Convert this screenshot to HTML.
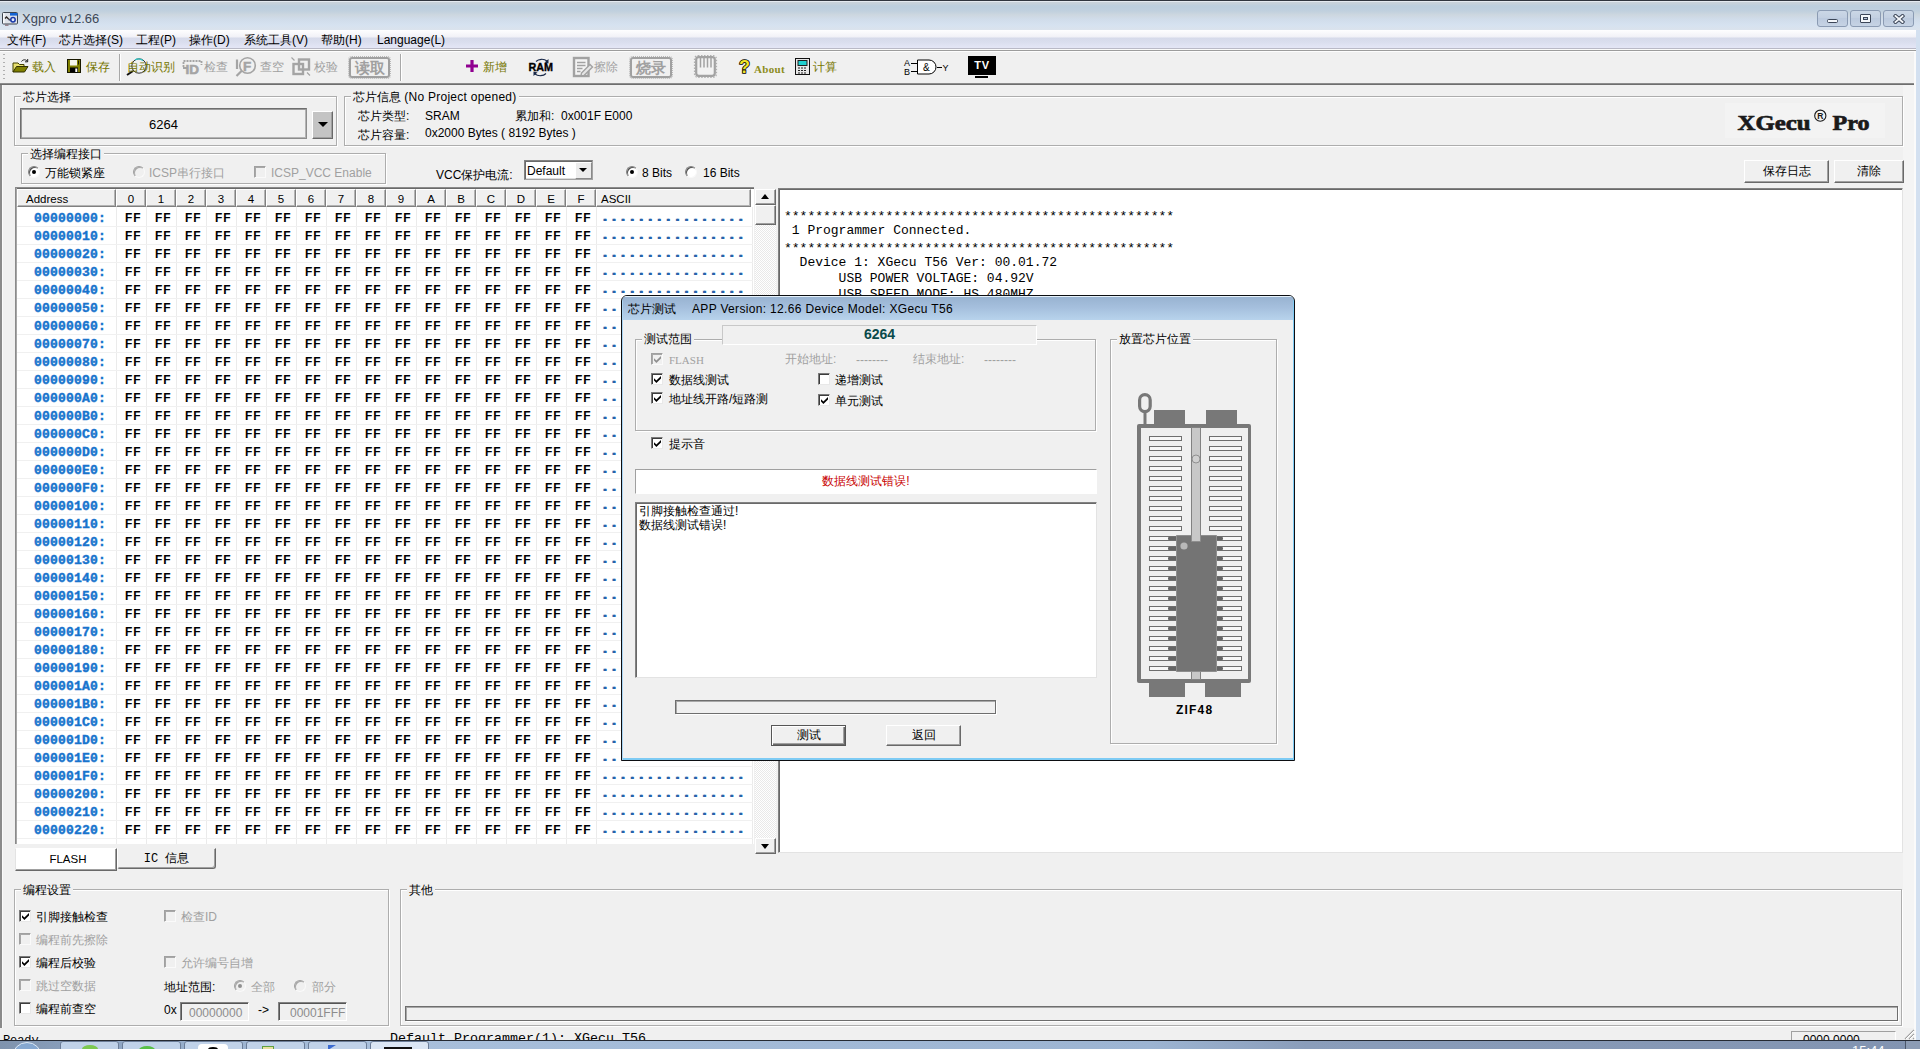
<!DOCTYPE html>
<html lang="zh"><head><meta charset="utf-8"><title>Xgpro v12.66</title>
<style>
*{box-sizing:border-box;margin:0;padding:0}
html,body{width:1920px;height:1049px;overflow:hidden;background:#f0f0f0}
body{position:relative;font-family:"Liberation Sans",sans-serif;font-size:12px;color:#000;line-height:1}
.a{position:absolute;white-space:nowrap}
.t{position:absolute;white-space:nowrap;line-height:14px;height:14px;font-size:12px}
.g{color:#a0a0a0}
.ol{color:#767600}
.mono{font-family:"Liberation Mono",monospace}
.grp{position:absolute;border:1px solid #d5dfe5;border-color:#adadad;box-shadow:inset 1px 1px 0 #fff, 1px 1px 0 #fff}
.grp>.lb{position:absolute;top:-8px;left:6px;background:#f0f0f0;padding:0 2px;line-height:14px;height:14px;font-size:12px;white-space:nowrap}
.cb{position:absolute;width:12px;height:12px;background:#fff;border:1px solid;border-color:#7a7a7a #e8e8e8 #e8e8e8 #7a7a7a;box-shadow:inset 1px 1px 0 #3c3c3c}
.cb.d{background:#f0f0f0;border-color:#a0a0a0 #fafafa #fafafa #a0a0a0;box-shadow:inset 1px 1px 0 #a8a8a8}
.cb svg{position:absolute;left:1px;top:1px;width:9px;height:9px}
.rd{position:absolute;width:12px;height:12px;border-radius:50%;background:#fff;border:1px solid;border-color:#808080 #f8f8f8 #f8f8f8 #808080;box-shadow:inset 1px 1px 0 #505050}
.rd.d{background:#f0f0f0;border-color:#a0a0a0 #fafafa #fafafa #a0a0a0;box-shadow:inset 1px 1px 0 #a8a8a8}
.rd i{position:absolute;left:3px;top:3px;width:4px;height:4px;border-radius:50%;background:#000}
.rd.d i{background:#909090}
.btn{position:absolute;background:#f0f0f0;border:1px solid;border-color:#fff #696969 #696969 #fff;box-shadow:inset -1px -1px 0 #a0a0a0;text-align:center;font-size:12px;white-space:nowrap}
.sunk{position:absolute;border:1px solid;border-color:#828282 #fff #fff #828282;box-shadow:inset 1px 1px 0 #555}
.hd{position:absolute;top:2px;height:18px;background:#f0f0f0;border:1px solid;border-color:#fff #808080 #808080 #fff;box-shadow:inset -1px -1px 0 #b4b4b4;font-size:11.5px;line-height:18px;text-align:center;white-space:nowrap}
.row{position:absolute;left:2px;width:736px;height:18px;border-bottom:1px solid #f0f0f0}
.ad{position:absolute;left:17px;top:3px;font:bold 13px/14px "Liberation Mono",monospace;color:#1874cd;letter-spacing:0.2px;white-space:nowrap;-webkit-text-stroke:0.45px #1874cd}
.hx{position:absolute;left:108px;top:2px;font:bold 12px/14px "Liberation Sans",sans-serif;color:#000;white-space:nowrap;word-spacing:0}
.hx b{display:inline-block;width:30px;text-align:left;font-weight:bold;letter-spacing:0.8px}
.as{position:absolute;left:583px;top:2px;font:bold 15px/14px "Liberation Mono",monospace;color:#2663ab;letter-spacing:0.05px;text-shadow:1px 0 0 #2663ab;white-space:nowrap}
</style></head>
<body>
<div class="a" style="left:0;top:0;width:1920px;height:30px;background:linear-gradient(#c8d2da 0,#c8d2da 3px,#bccedd 6px,#c0d0de 11px,#cdd7e0 15px,#d0dcea 19px,#d6e2f0 25px,#dbe3ed 30px)"></div>
<div class="a" style="left:0;top:0;width:1920px;height:1px;background:#30363e"></div>
<div class="a" style="left:0;top:1px;width:1920px;height:1px;background:#e4eaf0"></div>
<svg class="a" style="left:2px;top:12px" width="17" height="15" viewBox="0 0 17 15"><rect x="0.500" y="0.500" width="15" height="11.500" rx="1" fill="#dde1e8" stroke="#3e4650"/><rect x="1.200" y="1.200" width="1.300" height="10" fill="#fff"/><rect x="8" y="1" width="7.500" height="2.600" fill="#1464d4"/><path d="M3 6.500 L4.500 5 L6 6.500 L8 8 L9 7.500" fill="none" stroke="#2a2420" stroke-width="1.300"/><path d="M6.500 8 L8.500 8" stroke="#5a6a9a" stroke-width="1"/><circle cx="11" cy="7.700" r="2.200" fill="#e4ecff" stroke="#1838a8" stroke-width="1.500"/><rect x="3" y="12.500" width="3.500" height="1.300" fill="#8a7078"/></svg>
<div class="a" style="left:22px;top:11px;font-size:13px;line-height:16px;color:#3d4756">Xgpro v12.66</div>
<div class="a" style="left:1817px;top:10px;width:31px;height:17px;border:1px solid #8b9bb3;border-radius:3px;background:linear-gradient(#cbd7e6,#c2cfe1 50%,#bccade 50%,#c6d3e4)"><div class="a" style="left:9px;top:8px;width:11px;height:4px;border:1px solid #3c4658;background:#f4f7fb;border-radius:1.5px"></div></div>
<div class="a" style="left:1850px;top:10px;width:31px;height:17px;border:1px solid #8b9bb3;border-radius:3px;background:linear-gradient(#cbd7e6,#c2cfe1 50%,#bccade 50%,#c6d3e4)"><div class="a" style="left:9px;top:3px;width:11px;height:9px;border:1px solid #3c4658;background:#f4f7fb;border-radius:1px"></div><div class="a" style="left:12px;top:6px;width:5px;height:3px;border:1px solid #3c4658;background:#b8c6da"></div></div>
<div class="a" style="left:1883px;top:10px;width:31px;height:17px;border:1px solid #8b9bb3;border-radius:3px;background:linear-gradient(#cbd7e6,#c2cfe1 50%,#bccade 50%,#c6d3e4)"><svg class="a" style="left:9px;top:3px" width="12" height="10" viewBox="0 0 12 10"><path d="M2.500 2 L9.500 8 M9.500 2 L2.500 8" stroke="#3c4658" stroke-width="3.800" stroke-linecap="square"/><path d="M2.500 2 L9.500 8 M9.500 2 L2.500 8" stroke="#f4f7fb" stroke-width="1.900" stroke-linecap="square"/></svg></div>
<div class="a" style="left:0;top:30px;width:1916px;height:18px;background:linear-gradient(#fefeff 0,#f1f1f7 7px,#d6daea 8px,#dadeee 12px,#e4e6f6 18px)"></div>
<div class="a" style="left:0;top:48px;width:1916px;height:1px;background:#b9b9c6"></div>
<div class="a" style="left:0;top:49px;width:1916px;height:1px;background:#fafafa"></div>
<div class="a" style="left:0;top:50px;width:1916px;height:1px;background:#9c9c9c"></div>
<div class="a" style="left:0;top:51px;width:1916px;height:1px;background:#fdfdfd"></div>
<div class="a" style="left:1916px;top:30px;width:4px;height:1010px;background:#d3e0f0"></div>
<div class="a" style="left:1914px;top:52px;width:2px;height:988px;background:#fafafa"></div>
<div class="t " style="left:7px;top:33px;color:#454d5ewidth:39.35px;text-align-last:justify">文件(F)</div>
<div class="t " style="left:59px;top:33px;color:#454d5ewidth:64.00px;text-align-last:justify">芯片选择(S)</div>
<div class="t " style="left:136px;top:33px;color:#454d5ewidth:40.00px;text-align-last:justify">工程(P)</div>
<div class="t " style="left:189px;top:33px;color:#454d5ewidth:40.70px;text-align-last:justify">操作(D)</div>
<div class="t " style="left:244px;top:33px;color:#454d5ewidth:64.00px;text-align-last:justify">系统工具(V)</div>
<div class="t " style="left:321px;top:33px;color:#454d5ewidth:40.70px;text-align-last:justify">帮助(H)</div>
<div class="t " style="left:377px;top:33px;color:#454d5ewidth:68.10px;text-align-last:justify">Language(L)</div>
<div class="a" style="left:3px;top:54px;width:3px;height:28px;background:repeating-linear-gradient(#b0b0b0 0,#b0b0b0 1px,transparent 1px,transparent 4px);width:2px"></div>
<svg class="a" style="left:12px;top:58px" width="18" height="16" viewBox="0 0 18 16"><path d="M1 14 L1 5 L6 5 L7.5 6.5 L12 6.5 L12 8" fill="#e8e070" stroke="#404000"/><path d="M1 14 L4.5 8.5 L16 8.5 L12.5 14 Z" fill="#808000" stroke="#303000"/><path d="M9.5 3.5 C11 1.2 14 1.2 15.5 3.5 M15.7 1 L15.7 3.8 L13 3.8" fill="none" stroke="#202020"/></svg>
<div class="a ol" style="left:32px;top:59px;font-size:12px;line-height:16px;height:16px;width:24.00px;text-align-last:justify">载入</div>
<svg class="a" style="left:67px;top:59px" width="15" height="15" viewBox="0 0 15 15"><rect x="0.5" y="0.5" width="13" height="13" fill="#808000" stroke="#181800"/><rect x="3" y="1" width="7" height="5.5" fill="#f4f4ec"/><rect x="11" y="1.500" width="1" height="4" fill="#181800"/><rect x="3" y="8.500" width="8" height="5" fill="#000"/><rect x="8.300" y="9.500" width="2" height="3.500" fill="#fff"/></svg>
<div class="a ol" style="left:86px;top:59px;font-size:12px;line-height:16px;height:16px;width:24.00px;text-align-last:justify">保存</div>
<div class="a" style="left:119px;top:54px;width:1px;height:27px;background:#a8a8a8"></div><div class="a" style="left:120px;top:54px;width:1px;height:27px;background:#fff"></div>
<svg class="a" style="left:126px;top:57px" width="22" height="20" viewBox="0 0 22 20"><circle cx="13" cy="9" r="7.2" fill="none" stroke="#303030" stroke-width="1"/><path d="M9 3 A7 7 0 0 1 17 3.5" fill="none" stroke="#30c8c8" stroke-width="1.2"/><path d="M1 18 L7 14" stroke="#101010" stroke-width="2"/></svg>
<div class="a ol" style="left:127px;top:59px;font-size:12px;line-height:16px;height:16px;width:48.00px;text-align-last:justify">自动识别</div>
<svg class="a" style="left:182px;top:59px" width="21" height="16" viewBox="0 0 21 16"><path d="M1.500 8 L1.500 2 L19.500 2 L19.500 6" fill="none" stroke="#a4a4a4" stroke-width="1.800" stroke-dasharray="2 1"/><path d="M1 9 H5" stroke="#a4a4a4" stroke-width="2"/><text x="3.500" y="14.500" font-family="Liberation Sans" font-weight="bold" font-size="13.500" fill="#a4a4a4" stroke="#a4a4a4" stroke-width="0.600">ID</text></svg>
<div class="a g" style="left:204px;top:59px;font-size:12px;line-height:16px;height:16px;width:24.00px;text-align-last:justify">检查</div>
<svg class="a" style="left:235px;top:56px" width="24" height="22" viewBox="0 0 24 22"><circle cx="12.500" cy="9.500" r="7.800" fill="none" stroke="#a4a4a4" stroke-width="1.600"/><text x="8" y="14.500" font-family="Liberation Sans" font-weight="bold" font-size="13.500" fill="#a4a4a4" stroke="#a4a4a4" stroke-width="0.500">F</text><path d="M2 3.500 L2 13 M1.500 20 L7 14.500" stroke="#a4a4a4" stroke-width="2.200" fill="none"/></svg>
<div class="a g" style="left:260px;top:59px;font-size:12px;line-height:16px;height:16px;width:24.00px;text-align-last:justify">查空</div>
<svg class="a" style="left:291px;top:57px" width="22" height="20" viewBox="0 0 22 20"><rect x="2.500" y="7" width="9.500" height="10" fill="none" stroke="#a4a4a4" stroke-width="2.400"/><rect x="8" y="2.500" width="10" height="10" fill="none" stroke="#a4a4a4" stroke-width="2.400"/><path d="M0.500 0.500 L3.500 3.500 M16 15.500 L19 18.500" stroke="#a4a4a4" stroke-width="1.200"/></svg>
<div class="a g" style="left:314px;top:59px;font-size:12px;line-height:16px;height:16px;width:24.00px;text-align-last:justify">校验</div>
<div class="a" style="left:349px;top:57px;width:41px;height:21px;border:2px solid #a0a0a0;border-radius:3px;outline:1px dotted #b8b8b8;outline-offset:0px;color:#a0a0a0;font-weight:bold;font-size:15px;line-height:17px;text-align:center"><span style="display:inline-block;white-space:nowrap;width:30.00px;text-align-last:justify">读取</span></div>
<div class="a" style="left:400px;top:54px;width:1px;height:27px;background:#a8a8a8"></div><div class="a" style="left:401px;top:54px;width:1px;height:27px;background:#fff"></div>
<svg class="a" style="left:465px;top:59px" width="14" height="14" viewBox="0 0 14 14"><path d="M7 1 L7 13 M1 7 L13 7" stroke="#900090" stroke-width="3.2"/></svg>
<div class="a ol" style="left:483px;top:59px;font-size:12px;line-height:16px;height:16px;width:24.00px;text-align-last:justify">新增</div>
<svg class="a" style="left:526px;top:56px" width="30" height="22" viewBox="0 0 30 22"><path d="M10 5.500 A7 5 0 0 1 21 5 M20 17.500 A7 5 0 0 1 9 18" fill="none" stroke="#182848" stroke-width="1.100"/><path d="M22.500 3 L22.500 7.500 L18.500 6.500 Z M7.500 20 L7.500 15.500 L11.500 16.500 Z" fill="#182848"/><text x="2.500" y="14.600" font-family="Liberation Sans" font-weight="bold" font-size="10.500" fill="#000" stroke="#000" stroke-width="0.350" textLength="24.500" lengthAdjust="spacingAndGlyphs">RAM</text></svg>
<svg class="a" style="left:572px;top:56px" width="22" height="22" viewBox="0 0 22 22"><rect x="2" y="2" width="14.500" height="18" fill="#f4f4f4" stroke="#a2a2a2" stroke-width="2.400"/><path d="M5 6.500 H13.500 M5 9.500 H13.500 M5 12.500 H10.500 M5 15.500 H8.500" stroke="#a2a2a2" stroke-width="1.300"/><path d="M9.500 17 L18 8.500 L20.500 11 L12 19.500 L9 20 Z" fill="#e6e6e6" stroke="#a2a2a2" stroke-width="1.400"/></svg>
<div class="a g" style="left:594px;top:59px;font-size:12px;line-height:16px;height:16px;width:24.00px;text-align-last:justify">擦除</div>
<div class="a" style="left:630px;top:57px;width:42px;height:21px;border:2px solid #a0a0a0;border-radius:3px;outline:1px dotted #b8b8b8;outline-offset:0px;color:#a0a0a0;font-weight:bold;font-size:15px;line-height:17px;text-align:center"><span style="display:inline-block;white-space:nowrap;width:30.00px;text-align-last:justify">烧录</span></div>
<svg class="a" style="left:693px;top:54px" width="25" height="25" viewBox="0 0 25 25"><rect x="1.500" y="1.500" width="22" height="22" rx="3.500" fill="none" stroke="#b0b0b0" stroke-width="1.200" stroke-dasharray="1.500 1.500"/><rect x="3.200" y="3.200" width="18.600" height="18.600" rx="2.500" fill="#f2f2f2" stroke="#a2a2a2" stroke-width="2.200"/><path d="M7.500 4 V13.500 M11 4 V13.500 M14.500 4 V13.500 M18 4 V13.500" stroke="#a2a2a2" stroke-width="1.500"/></svg>
<svg class="a" style="left:737px;top:56px" width="15" height="20" viewBox="0 0 15 20"><text x="2" y="16.500" font-family="Liberation Sans" font-weight="bold" font-size="18" fill="#f0e428" stroke="#000" stroke-width="1.700" paint-order="stroke" stroke-linejoin="round">?</text></svg>
<div class="a" style="left:754px;top:61px;font:bold 11px/16px 'Liberation Serif',serif;letter-spacing:0.35px;color:#8c8c1c">About</div>
<svg class="a" style="left:795px;top:58px" width="16" height="17" viewBox="0 0 16 17"><rect x="0.5" y="0.5" width="14" height="16" fill="#e8e8e8" stroke="#101010"/><rect x="3" y="2.5" width="9" height="5" fill="#20d0d0" stroke="#202020"/><path d="M3 10 H12 M3 12.5 H12 M3 15 H12" stroke="#202020" stroke-dasharray="2 1"/></svg>
<div class="a ol" style="left:813px;top:59px;font-size:12px;line-height:16px;height:16px;width:24.00px;text-align-last:justify">计算</div>
<svg class="a" style="left:902px;top:56px" width="48" height="22" viewBox="0 0 48 22"><text x="2" y="9.500" font-family="Liberation Sans" font-size="9" fill="#000">A</text><text x="2" y="19" font-family="Liberation Sans" font-size="9" fill="#000">B</text><path d="M9 7.500 H15 M9 15.500 H15 M35 11.500 H40" stroke="#000"/><path d="M15.500 4 H27 A7 7 0 0 1 27 18 H15.500 Z" fill="#fff" stroke="#000"/><text x="21" y="15" font-family="Liberation Sans" font-size="10" fill="#000">&amp;</text><text x="40.500" y="14.500" font-family="Liberation Sans" font-size="9" fill="#000">Y</text></svg>
<div class="a" style="left:968px;top:56px;width:28px;height:19px;background:#000;color:#fff;font-weight:bold;font-size:11px;line-height:19px;letter-spacing:0.6px;text-align:center">TV</div><div class="a" style="left:975px;top:76px;width:13px;height:2px;background:#000"></div>
<div class="a" style="left:0;top:83px;width:1914px;height:1px;background:#8c8c8c"></div>
<div class="a" style="left:0;top:84px;width:1914px;height:1px;background:#6e6e6e"></div>
<div class="a" style="left:1903px;top:85px;width:11px;height:943px;background:#f4f4f4"></div>
<div class="a" style="left:0px;top:85px;width:2px;height:943px;background:#8a8a8a"></div>
<div class="a" style="left:2px;top:85px;width:1px;height:943px;background:#fafafa"></div>
<div class="grp" style="left:14px;top:96px;width:323px;height:50px"><span class="lb" style="top:-7px;width:52.00px;text-align-last:justify">芯片选择</span></div>
<div class="a" style="left:20px;top:108px;width:287px;height:31px;background:#f0f0f0;border:1px solid;border-color:#6e6e6e #8c8c8c #8c8c8c #6e6e6e;box-shadow:inset 1px 1px 0 #9a9a9a, inset -1px -1px 0 #b4b4b4;font-size:13px;line-height:32px;text-align:center">6264</div>
<div class="a" style="left:312px;top:111px;width:21px;height:28px;background:#c4c4c4;border:1px solid;border-color:#fff #696969 #696969 #fff;box-shadow:inset -1px -1px 0 #a0a0a0"><div class="a" style="left:5px;top:10px;border:5px solid transparent;border-top:5px solid #000;border-bottom:0"></div></div>
<div class="grp" style="left:344px;top:96px;width:1559px;height:50px"><span class="lb" style="top:-7px;width:167.50px;text-align-last:justify">芯片信息 <span style="letter-spacing:0.25px">(No Project opened)</span></span></div>
<div class="t " style="left:358px;top:109px;width:51.35px;text-align-last:justify">芯片类型:</div>
<div class="t " style="left:425px;top:109px;letter-spacing:-0.3pxwidth:33.50px;text-align-last:justify">SRAM</div>
<div class="t " style="left:515px;top:109px;width:39.35px;text-align-last:justify">累加和:</div>
<div class="t " style="left:561px;top:109px;letter-spacing:0.1pxwidth:72.50px;text-align-last:justify">0x001F E000</div>
<div class="t " style="left:358px;top:128px;width:51.35px;text-align-last:justify">芯片容量:</div>
<div class="t " style="left:425px;top:126px;letter-spacing:0.36pxwidth:160.50px;text-align-last:justify">0x2000 Bytes ( 8192 Bytes )</div>
<div class="a" style="left:1725px;top:103px;width:160px;height:35px;background:#f3f3f3"></div>
<svg class="a" style="left:1725px;top:103px" width="160" height="35" viewBox="0 0 160 35"><g font-family="Liberation Serif" font-weight="bold" font-size="21.5" fill="#1a1a1a" stroke="#1a1a1a" stroke-width="0.7"><text x="12.5" y="27.3" textLength="73" lengthAdjust="spacingAndGlyphs">XGecu</text><text x="107.5" y="27.3" textLength="37" lengthAdjust="spacingAndGlyphs">Pro</text></g><circle cx="95.3" cy="12.700" r="5.6" fill="none" stroke="#1a1a1a" stroke-width="1.1"/><text x="92.300" y="16" font-family="Liberation Sans" font-weight="bold" font-size="8.500" fill="#1a1a1a">R</text></svg>
<div class="grp" style="left:21px;top:153px;width:365px;height:31px"><span class="lb" style="top:-7px;width:76.00px;text-align-last:justify">选择编程接口</span></div>
<div class="rd" style="left:28px;top:166px"><i></i></div>
<div class="t " style="left:45px;top:166px;width:60.00px;text-align-last:justify">万能锁紧座</div>
<div class="rd d" style="left:133px;top:166px"></div>
<div class="t g" style="left:149px;top:166px;width:76.05px;text-align-last:justify">ICSP串行接口</div>
<div class="cb d" style="left:254px;top:166px"></div>
<div class="t g" style="left:271px;top:166px;letter-spacing:-0.45pxwidth:94.00px;text-align-last:justify">ICSP_VCC Enable</div>
<div class="t " style="left:436px;top:168px;width:76.70px;text-align-last:justify">VCC保护电流:</div>
<div class="a" style="left:524px;top:160px;width:69px;height:20px;background:#fff;border:1px solid;border-color:#828282 #a4a4a4 #a4a4a4 #828282;box-shadow:inset 1px 1px 0 #6a6a6a, inset -1px -1px 0 #dcdcdc"><div class="a" style="left:2px;top:3px;font-size:12px;line-height:14px">Default</div><div class="a" style="left:50px;top:1px;width:17px;height:17px;background:#ececec;border:1px solid;border-color:#fff #8a8a8a #8a8a8a #fff"><div class="a" style="left:3px;top:5px;border:4px solid transparent;border-top:4px solid #000;border-bottom:0"></div></div></div>
<div class="rd" style="left:626px;top:166px"><i></i></div>
<div class="t " style="left:642px;top:166px;width:30.05px;text-align-last:justify">8 Bits</div>
<div class="rd" style="left:685px;top:166px"></div>
<div class="t " style="left:703px;top:166px;width:36.70px;text-align-last:justify">16 Bits</div>
<div class="btn" style="left:1744px;top:160px;width:85px;height:23px;line-height:21px"><span style="display:inline-block;white-space:nowrap;width:48.00px;text-align-last:justify">保存日志</span></div>
<div class="btn" style="left:1834px;top:160px;width:70px;height:23px;line-height:21px"><span style="display:inline-block;white-space:nowrap;width:24.00px;text-align-last:justify">清除</span></div>
<div class="a" style="left:15px;top:187px;width:739px;height:657px;background:#fff;overflow:hidden">
<div class="a" style="left:0;top:0;width:739px;height:1px;background:#8a8a8a"></div><div class="a" style="left:0;top:1px;width:739px;height:1px;background:#6a6a6a"></div><div class="a" style="left:0;top:0;width:1px;height:657px;background:#8a8a8a"></div><div class="a" style="left:1px;top:1px;width:1px;height:656px;background:#a6a6a6"></div>
<div class="a" style="left:101px;top:20px;width:1px;height:637px;background:#ebebeb"></div><div class="a" style="left:131px;top:20px;width:1px;height:637px;background:#ebebeb"></div><div class="a" style="left:161px;top:20px;width:1px;height:637px;background:#ebebeb"></div><div class="a" style="left:191px;top:20px;width:1px;height:637px;background:#ebebeb"></div><div class="a" style="left:221px;top:20px;width:1px;height:637px;background:#ebebeb"></div><div class="a" style="left:251px;top:20px;width:1px;height:637px;background:#ebebeb"></div><div class="a" style="left:281px;top:20px;width:1px;height:637px;background:#ebebeb"></div><div class="a" style="left:311px;top:20px;width:1px;height:637px;background:#ebebeb"></div><div class="a" style="left:341px;top:20px;width:1px;height:637px;background:#ebebeb"></div><div class="a" style="left:371px;top:20px;width:1px;height:637px;background:#ebebeb"></div><div class="a" style="left:401px;top:20px;width:1px;height:637px;background:#ebebeb"></div><div class="a" style="left:431px;top:20px;width:1px;height:637px;background:#ebebeb"></div><div class="a" style="left:461px;top:20px;width:1px;height:637px;background:#ebebeb"></div><div class="a" style="left:491px;top:20px;width:1px;height:637px;background:#ebebeb"></div><div class="a" style="left:521px;top:20px;width:1px;height:637px;background:#ebebeb"></div><div class="a" style="left:551px;top:20px;width:1px;height:637px;background:#ebebeb"></div><div class="a" style="left:581px;top:20px;width:1px;height:637px;background:#ebebeb"></div><div class="a" style="left:737px;top:20px;width:1px;height:637px;background:#ebebeb"></div>
<div class="hd" style="left:2px;width:99px;text-align:left;padding-left:8px">Address</div><div class="hd" style="left:101px;width:30px">0</div><div class="hd" style="left:131px;width:30px">1</div><div class="hd" style="left:161px;width:30px">2</div><div class="hd" style="left:191px;width:30px">3</div><div class="hd" style="left:221px;width:30px">4</div><div class="hd" style="left:251px;width:30px">5</div><div class="hd" style="left:281px;width:30px">6</div><div class="hd" style="left:311px;width:30px">7</div><div class="hd" style="left:341px;width:30px">8</div><div class="hd" style="left:371px;width:30px">9</div><div class="hd" style="left:401px;width:30px">A</div><div class="hd" style="left:431px;width:30px">B</div><div class="hd" style="left:461px;width:30px">C</div><div class="hd" style="left:491px;width:30px">D</div><div class="hd" style="left:521px;width:30px">E</div><div class="hd" style="left:551px;width:30px">F</div><div class="hd" style="left:581px;width:155px;text-align:left;padding-left:4px">ASCII</div>
<div class="row" style="top:22px"><span class="ad">00000000:</span><span class="hx"><b>FF</b><b>FF</b><b>FF</b><b>FF</b><b>FF</b><b>FF</b><b>FF</b><b>FF</b><b>FF</b><b>FF</b><b>FF</b><b>FF</b><b>FF</b><b>FF</b><b>FF</b><b>FF</b></span><span class="as">................</span></div>
<div class="row" style="top:40px"><span class="ad">00000010:</span><span class="hx"><b>FF</b><b>FF</b><b>FF</b><b>FF</b><b>FF</b><b>FF</b><b>FF</b><b>FF</b><b>FF</b><b>FF</b><b>FF</b><b>FF</b><b>FF</b><b>FF</b><b>FF</b><b>FF</b></span><span class="as">................</span></div>
<div class="row" style="top:58px"><span class="ad">00000020:</span><span class="hx"><b>FF</b><b>FF</b><b>FF</b><b>FF</b><b>FF</b><b>FF</b><b>FF</b><b>FF</b><b>FF</b><b>FF</b><b>FF</b><b>FF</b><b>FF</b><b>FF</b><b>FF</b><b>FF</b></span><span class="as">................</span></div>
<div class="row" style="top:76px"><span class="ad">00000030:</span><span class="hx"><b>FF</b><b>FF</b><b>FF</b><b>FF</b><b>FF</b><b>FF</b><b>FF</b><b>FF</b><b>FF</b><b>FF</b><b>FF</b><b>FF</b><b>FF</b><b>FF</b><b>FF</b><b>FF</b></span><span class="as">................</span></div>
<div class="row" style="top:94px"><span class="ad">00000040:</span><span class="hx"><b>FF</b><b>FF</b><b>FF</b><b>FF</b><b>FF</b><b>FF</b><b>FF</b><b>FF</b><b>FF</b><b>FF</b><b>FF</b><b>FF</b><b>FF</b><b>FF</b><b>FF</b><b>FF</b></span><span class="as">................</span></div>
<div class="row" style="top:112px"><span class="ad">00000050:</span><span class="hx"><b>FF</b><b>FF</b><b>FF</b><b>FF</b><b>FF</b><b>FF</b><b>FF</b><b>FF</b><b>FF</b><b>FF</b><b>FF</b><b>FF</b><b>FF</b><b>FF</b><b>FF</b><b>FF</b></span><span class="as">................</span></div>
<div class="row" style="top:130px"><span class="ad">00000060:</span><span class="hx"><b>FF</b><b>FF</b><b>FF</b><b>FF</b><b>FF</b><b>FF</b><b>FF</b><b>FF</b><b>FF</b><b>FF</b><b>FF</b><b>FF</b><b>FF</b><b>FF</b><b>FF</b><b>FF</b></span><span class="as">................</span></div>
<div class="row" style="top:148px"><span class="ad">00000070:</span><span class="hx"><b>FF</b><b>FF</b><b>FF</b><b>FF</b><b>FF</b><b>FF</b><b>FF</b><b>FF</b><b>FF</b><b>FF</b><b>FF</b><b>FF</b><b>FF</b><b>FF</b><b>FF</b><b>FF</b></span><span class="as">................</span></div>
<div class="row" style="top:166px"><span class="ad">00000080:</span><span class="hx"><b>FF</b><b>FF</b><b>FF</b><b>FF</b><b>FF</b><b>FF</b><b>FF</b><b>FF</b><b>FF</b><b>FF</b><b>FF</b><b>FF</b><b>FF</b><b>FF</b><b>FF</b><b>FF</b></span><span class="as">................</span></div>
<div class="row" style="top:184px"><span class="ad">00000090:</span><span class="hx"><b>FF</b><b>FF</b><b>FF</b><b>FF</b><b>FF</b><b>FF</b><b>FF</b><b>FF</b><b>FF</b><b>FF</b><b>FF</b><b>FF</b><b>FF</b><b>FF</b><b>FF</b><b>FF</b></span><span class="as">................</span></div>
<div class="row" style="top:202px"><span class="ad">000000A0:</span><span class="hx"><b>FF</b><b>FF</b><b>FF</b><b>FF</b><b>FF</b><b>FF</b><b>FF</b><b>FF</b><b>FF</b><b>FF</b><b>FF</b><b>FF</b><b>FF</b><b>FF</b><b>FF</b><b>FF</b></span><span class="as">................</span></div>
<div class="row" style="top:220px"><span class="ad">000000B0:</span><span class="hx"><b>FF</b><b>FF</b><b>FF</b><b>FF</b><b>FF</b><b>FF</b><b>FF</b><b>FF</b><b>FF</b><b>FF</b><b>FF</b><b>FF</b><b>FF</b><b>FF</b><b>FF</b><b>FF</b></span><span class="as">................</span></div>
<div class="row" style="top:238px"><span class="ad">000000C0:</span><span class="hx"><b>FF</b><b>FF</b><b>FF</b><b>FF</b><b>FF</b><b>FF</b><b>FF</b><b>FF</b><b>FF</b><b>FF</b><b>FF</b><b>FF</b><b>FF</b><b>FF</b><b>FF</b><b>FF</b></span><span class="as">................</span></div>
<div class="row" style="top:256px"><span class="ad">000000D0:</span><span class="hx"><b>FF</b><b>FF</b><b>FF</b><b>FF</b><b>FF</b><b>FF</b><b>FF</b><b>FF</b><b>FF</b><b>FF</b><b>FF</b><b>FF</b><b>FF</b><b>FF</b><b>FF</b><b>FF</b></span><span class="as">................</span></div>
<div class="row" style="top:274px"><span class="ad">000000E0:</span><span class="hx"><b>FF</b><b>FF</b><b>FF</b><b>FF</b><b>FF</b><b>FF</b><b>FF</b><b>FF</b><b>FF</b><b>FF</b><b>FF</b><b>FF</b><b>FF</b><b>FF</b><b>FF</b><b>FF</b></span><span class="as">................</span></div>
<div class="row" style="top:292px"><span class="ad">000000F0:</span><span class="hx"><b>FF</b><b>FF</b><b>FF</b><b>FF</b><b>FF</b><b>FF</b><b>FF</b><b>FF</b><b>FF</b><b>FF</b><b>FF</b><b>FF</b><b>FF</b><b>FF</b><b>FF</b><b>FF</b></span><span class="as">................</span></div>
<div class="row" style="top:310px"><span class="ad">00000100:</span><span class="hx"><b>FF</b><b>FF</b><b>FF</b><b>FF</b><b>FF</b><b>FF</b><b>FF</b><b>FF</b><b>FF</b><b>FF</b><b>FF</b><b>FF</b><b>FF</b><b>FF</b><b>FF</b><b>FF</b></span><span class="as">................</span></div>
<div class="row" style="top:328px"><span class="ad">00000110:</span><span class="hx"><b>FF</b><b>FF</b><b>FF</b><b>FF</b><b>FF</b><b>FF</b><b>FF</b><b>FF</b><b>FF</b><b>FF</b><b>FF</b><b>FF</b><b>FF</b><b>FF</b><b>FF</b><b>FF</b></span><span class="as">................</span></div>
<div class="row" style="top:346px"><span class="ad">00000120:</span><span class="hx"><b>FF</b><b>FF</b><b>FF</b><b>FF</b><b>FF</b><b>FF</b><b>FF</b><b>FF</b><b>FF</b><b>FF</b><b>FF</b><b>FF</b><b>FF</b><b>FF</b><b>FF</b><b>FF</b></span><span class="as">................</span></div>
<div class="row" style="top:364px"><span class="ad">00000130:</span><span class="hx"><b>FF</b><b>FF</b><b>FF</b><b>FF</b><b>FF</b><b>FF</b><b>FF</b><b>FF</b><b>FF</b><b>FF</b><b>FF</b><b>FF</b><b>FF</b><b>FF</b><b>FF</b><b>FF</b></span><span class="as">................</span></div>
<div class="row" style="top:382px"><span class="ad">00000140:</span><span class="hx"><b>FF</b><b>FF</b><b>FF</b><b>FF</b><b>FF</b><b>FF</b><b>FF</b><b>FF</b><b>FF</b><b>FF</b><b>FF</b><b>FF</b><b>FF</b><b>FF</b><b>FF</b><b>FF</b></span><span class="as">................</span></div>
<div class="row" style="top:400px"><span class="ad">00000150:</span><span class="hx"><b>FF</b><b>FF</b><b>FF</b><b>FF</b><b>FF</b><b>FF</b><b>FF</b><b>FF</b><b>FF</b><b>FF</b><b>FF</b><b>FF</b><b>FF</b><b>FF</b><b>FF</b><b>FF</b></span><span class="as">................</span></div>
<div class="row" style="top:418px"><span class="ad">00000160:</span><span class="hx"><b>FF</b><b>FF</b><b>FF</b><b>FF</b><b>FF</b><b>FF</b><b>FF</b><b>FF</b><b>FF</b><b>FF</b><b>FF</b><b>FF</b><b>FF</b><b>FF</b><b>FF</b><b>FF</b></span><span class="as">................</span></div>
<div class="row" style="top:436px"><span class="ad">00000170:</span><span class="hx"><b>FF</b><b>FF</b><b>FF</b><b>FF</b><b>FF</b><b>FF</b><b>FF</b><b>FF</b><b>FF</b><b>FF</b><b>FF</b><b>FF</b><b>FF</b><b>FF</b><b>FF</b><b>FF</b></span><span class="as">................</span></div>
<div class="row" style="top:454px"><span class="ad">00000180:</span><span class="hx"><b>FF</b><b>FF</b><b>FF</b><b>FF</b><b>FF</b><b>FF</b><b>FF</b><b>FF</b><b>FF</b><b>FF</b><b>FF</b><b>FF</b><b>FF</b><b>FF</b><b>FF</b><b>FF</b></span><span class="as">................</span></div>
<div class="row" style="top:472px"><span class="ad">00000190:</span><span class="hx"><b>FF</b><b>FF</b><b>FF</b><b>FF</b><b>FF</b><b>FF</b><b>FF</b><b>FF</b><b>FF</b><b>FF</b><b>FF</b><b>FF</b><b>FF</b><b>FF</b><b>FF</b><b>FF</b></span><span class="as">................</span></div>
<div class="row" style="top:490px"><span class="ad">000001A0:</span><span class="hx"><b>FF</b><b>FF</b><b>FF</b><b>FF</b><b>FF</b><b>FF</b><b>FF</b><b>FF</b><b>FF</b><b>FF</b><b>FF</b><b>FF</b><b>FF</b><b>FF</b><b>FF</b><b>FF</b></span><span class="as">................</span></div>
<div class="row" style="top:508px"><span class="ad">000001B0:</span><span class="hx"><b>FF</b><b>FF</b><b>FF</b><b>FF</b><b>FF</b><b>FF</b><b>FF</b><b>FF</b><b>FF</b><b>FF</b><b>FF</b><b>FF</b><b>FF</b><b>FF</b><b>FF</b><b>FF</b></span><span class="as">................</span></div>
<div class="row" style="top:526px"><span class="ad">000001C0:</span><span class="hx"><b>FF</b><b>FF</b><b>FF</b><b>FF</b><b>FF</b><b>FF</b><b>FF</b><b>FF</b><b>FF</b><b>FF</b><b>FF</b><b>FF</b><b>FF</b><b>FF</b><b>FF</b><b>FF</b></span><span class="as">................</span></div>
<div class="row" style="top:544px"><span class="ad">000001D0:</span><span class="hx"><b>FF</b><b>FF</b><b>FF</b><b>FF</b><b>FF</b><b>FF</b><b>FF</b><b>FF</b><b>FF</b><b>FF</b><b>FF</b><b>FF</b><b>FF</b><b>FF</b><b>FF</b><b>FF</b></span><span class="as">................</span></div>
<div class="row" style="top:562px"><span class="ad">000001E0:</span><span class="hx"><b>FF</b><b>FF</b><b>FF</b><b>FF</b><b>FF</b><b>FF</b><b>FF</b><b>FF</b><b>FF</b><b>FF</b><b>FF</b><b>FF</b><b>FF</b><b>FF</b><b>FF</b><b>FF</b></span><span class="as">................</span></div>
<div class="row" style="top:580px"><span class="ad">000001F0:</span><span class="hx"><b>FF</b><b>FF</b><b>FF</b><b>FF</b><b>FF</b><b>FF</b><b>FF</b><b>FF</b><b>FF</b><b>FF</b><b>FF</b><b>FF</b><b>FF</b><b>FF</b><b>FF</b><b>FF</b></span><span class="as">................</span></div>
<div class="row" style="top:598px"><span class="ad">00000200:</span><span class="hx"><b>FF</b><b>FF</b><b>FF</b><b>FF</b><b>FF</b><b>FF</b><b>FF</b><b>FF</b><b>FF</b><b>FF</b><b>FF</b><b>FF</b><b>FF</b><b>FF</b><b>FF</b><b>FF</b></span><span class="as">................</span></div>
<div class="row" style="top:616px"><span class="ad">00000210:</span><span class="hx"><b>FF</b><b>FF</b><b>FF</b><b>FF</b><b>FF</b><b>FF</b><b>FF</b><b>FF</b><b>FF</b><b>FF</b><b>FF</b><b>FF</b><b>FF</b><b>FF</b><b>FF</b><b>FF</b></span><span class="as">................</span></div>
<div class="row" style="top:634px"><span class="ad">00000220:</span><span class="hx"><b>FF</b><b>FF</b><b>FF</b><b>FF</b><b>FF</b><b>FF</b><b>FF</b><b>FF</b><b>FF</b><b>FF</b><b>FF</b><b>FF</b><b>FF</b><b>FF</b><b>FF</b><b>FF</b></span><span class="as">................</span></div>
</div>
<div class="a" style="left:755px;top:189px;width:21px;height:665px;background:#f6f6f6;background-image:repeating-conic-gradient(#fff 0 25%,#e9e9e9 0 50%);background-size:2px 2px"></div>
<div class="a" style="left:755px;top:189px;width:21px;height:16px;background:#f0f0f0;border:1px solid;border-color:#fff #696969 #696969 #fff;box-shadow:inset -1px -1px 0 #a0a0a0"><div class="a" style="left:5px;top:4px;border:4px solid transparent;border-bottom:5px solid #000;border-top:0"></div></div>
<div class="a" style="left:755px;top:205px;width:21px;height:20px;background:#f0f0f0;border:1px solid;border-color:#fff #696969 #696969 #fff;box-shadow:inset -1px -1px 0 #a0a0a0"></div>
<div class="a" style="left:755px;top:838px;width:21px;height:16px;background:#f0f0f0;border:1px solid;border-color:#fff #696969 #696969 #fff;box-shadow:inset -1px -1px 0 #a0a0a0"><div class="a" style="left:5px;top:5px;border:4px solid transparent;border-top:5px solid #000;border-bottom:0"></div></div>
<div class="a" style="left:778px;top:188px;width:1125px;height:665px;background:#fff;border:1px solid;border-color:#828282 #e3e3e3 #e3e3e3 #828282;box-shadow:inset 1px 1px 0 #696969;overflow:hidden">
<div class="a mono" style="left:5px;top:20px;font-size:13px;line-height:16px;white-space:pre">**************************************************</div>
<div class="a mono" style="left:5px;top:34px;font-size:13px;line-height:16px;white-space:pre"> 1 Programmer Connected.</div>
<div class="a mono" style="left:5px;top:52px;font-size:13px;line-height:16px;white-space:pre">**************************************************</div>
<div class="a mono" style="left:5px;top:66px;font-size:13px;line-height:16px;white-space:pre">  Device 1: XGecu T56 Ver: 00.01.72</div>
<div class="a mono" style="left:5px;top:82px;font-size:13px;line-height:16px;white-space:pre">       USB POWER VOLTAGE: 04.92V</div>
<div class="a mono" style="left:5px;top:98px;font-size:13px;line-height:16px;white-space:pre">       USB SPEED MODE: HS 480MHZ</div>
</div>
<div class="a" style="left:15px;top:848px;width:102px;height:23px;background:#fff;border:1px solid;border-color:#fff #696969 #696969 #e3e3e3;box-shadow:inset -1px -1px 0 #a0a0a0;font-size:11.5px;line-height:21px;text-align:center;padding-left:4px">FLASH</div>
<div class="a" style="left:117px;top:848px;width:99px;height:21px;background:#f0f0f0;border:1px solid;border-color:#f0f0f0 #696969 #696969 #fff;box-shadow:inset -1px -1px 0 #a0a0a0;border-radius:0 0 3px 3px;font-size:12px;line-height:19px;text-align:center"><span class="mono" style="font-size:12px">IC </span><span style="display:inline-block;white-space:nowrap;width:24.00px;text-align-last:justify">信息</span></div>
<div class="grp" style="left:14px;top:889px;width:375px;height:137px"><span class="lb" style="top:-7px;width:52.00px;text-align-last:justify">编程设置</span></div>
<div class="cb" style="left:19px;top:910px"><svg viewBox="0 0 9 9"><path d="M1 3.2 L3.4 5.6 L8 1 L8 3.4 L3.4 8 L1 5.6 Z" fill="#000"/></svg></div>
<div class="t " style="left:36px;top:910px;width:72.00px;text-align-last:justify">引脚接触检查</div>
<div class="cb d" style="left:19px;top:933px"></div>
<div class="t g" style="left:36px;top:933px;width:72.00px;text-align-last:justify">编程前先擦除</div>
<div class="cb" style="left:19px;top:956px"><svg viewBox="0 0 9 9"><path d="M1 3.2 L3.4 5.6 L8 1 L8 3.4 L3.4 8 L1 5.6 Z" fill="#000"/></svg></div>
<div class="t " style="left:36px;top:956px;width:60.00px;text-align-last:justify">编程后校验</div>
<div class="cb d" style="left:19px;top:979px"></div>
<div class="t g" style="left:36px;top:979px;width:60.00px;text-align-last:justify">跳过空数据</div>
<div class="cb" style="left:19px;top:1002px"></div>
<div class="t " style="left:36px;top:1002px;width:60.00px;text-align-last:justify">编程前查空</div>
<div class="cb d" style="left:164px;top:910px"></div>
<div class="t g" style="left:181px;top:910px;width:36.00px;text-align-last:justify">检查ID</div>
<div class="cb d" style="left:164px;top:956px"></div>
<div class="t g" style="left:181px;top:956px;width:72.00px;text-align-last:justify">允许编号自增</div>
<div class="t " style="left:164px;top:980px;width:51.35px;text-align-last:justify">地址范围:</div>
<div class="rd d" style="left:234px;top:980px"><i></i></div>
<div class="t g" style="left:251px;top:980px;width:24.00px;text-align-last:justify">全部</div>
<div class="rd d" style="left:294px;top:980px"></div>
<div class="t g" style="left:312px;top:980px;width:24.00px;text-align-last:justify">部分</div>
<div class="t " style="left:164px;top:1003px;width:12.70px;text-align-last:justify">0x</div>
<div class="sunk" style="left:180px;top:1002px;width:69px;height:19px;background:#f0f0f0;color:#8c8c8c;font-size:12px;line-height:18px;padding-left:8px;padding-top:1px">00000000</div>
<div class="t " style="left:258px;top:1003px;width:11.05px;text-align-last:justify">-&gt;</div>
<div class="sunk" style="left:278px;top:1002px;width:69px;height:19px;background:#f0f0f0;color:#8c8c8c;font-size:12px;line-height:18px;padding-left:11px;padding-top:1px">00001FFF</div>
<div class="grp" style="left:400px;top:889px;width:1502px;height:137px"><span class="lb" style="top:-7px;width:28.00px;text-align-last:justify">其他</span></div>
<div class="a" style="left:405px;top:1006px;width:1493px;height:15px;background:#f0f0f0;border:1px solid #6e6e6e;box-shadow:inset 1px 1px 0 #a8a8a8, 1px 1px 0 #fff"></div>
<div class="a" style="left:0;top:1028px;width:1907px;height:12px;background:#f0f0f0;overflow:hidden"><div class="a mono" style="left:3px;top:6px;font-size:12px;line-height:14px;letter-spacing:-0.1px">Ready</div><div class="a mono" style="left:390px;top:4px;font-size:13.33px;line-height:14px">Default Programmer(1): XGecu T56</div><div class="a" style="left:1791px;top:3px;width:105px;height:20px;border:1px solid;border-color:#a0a0a0 #fff #fff #a0a0a0"><div class="a" style="left:11px;top:1px;font-size:12px;line-height:14px">0000 0000</div></div></div>
<svg class="a" style="left:1902px;top:1027px" width="13" height="13" viewBox="0 0 13 13"><path d="M12 3 L3 12 M12 7 L7 12 M12 11 L11 12" stroke="#a0a0a0" stroke-width="1.200"/><path d="M12 4 L4 12 M12 8 L8 12" stroke="#fff" stroke-width="1"/></svg>
<div class="a" style="left:0;top:1040px;width:1920px;height:9px;background:linear-gradient(90deg,#7f93ad 0,#8fa6c4 6%,#a9c0dc 18%,#9cb4d2 60%,#8a9dba 68%,#8294b1 100%);overflow:hidden">
<div class="a" style="left:0;top:0;width:1920px;height:1px;background:#252a33"></div>
<div class="a" style="left:12px;top:2px;width:30px;height:30px;border-radius:50%;border:1px solid #dce8f4;background:#86a8d0"></div>
<div class="a" style="left:60px;top:1px;width:59px;height:12px;border:1px solid #6b7d98;border-radius:3px;background:#c0d2e9"></div>
<div class="a" style="left:122px;top:1px;width:59px;height:12px;border:1px solid #6b7d98;border-radius:3px;background:#c0d2e9"></div>
<div class="a" style="left:184px;top:1px;width:59px;height:12px;border:1px solid #6b7d98;border-radius:3px;background:#c0d2e9"></div>
<div class="a" style="left:246px;top:1px;width:59px;height:12px;border:1px solid #6b7d98;border-radius:3px;background:#c0d2e9"></div>
<div class="a" style="left:308px;top:1px;width:59px;height:12px;border:1px solid #6b7d98;border-radius:3px;background:#c0d2e9"></div>
<div class="a" style="left:370px;top:1px;width:59px;height:12px;border:1px solid #6b7d98;border-radius:3px;background:#dbe6f4"></div>
<div class="a" style="left:82px;top:5px;width:16px;height:8px;border-radius:50%;background:#7cc850"></div><div class="a" style="left:139px;top:6px;width:16px;height:8px;border-radius:50%;background:#58c048"></div><div class="a" style="left:198px;top:4px;width:30px;height:8px;border-radius:6px;background:#fff"></div><div class="a" style="left:208px;top:7px;width:10px;height:5px;border-radius:50%;background:#000"></div><div class="a" style="left:262px;top:6px;width:12px;height:5px;background:#e8e0a0;border:1px solid #60a040"></div><div class="a" style="left:328px;top:5px;width:0;height:0;border:5px solid transparent;border-left:8px solid #3a6ad0;border-top:0"></div><div class="a" style="left:384px;top:7px;width:28px;height:3px;background:#101010"></div>
<div class="a" style="left:1852px;top:0px;font-size:13px;line-height:16px;color:#fff;top:3px">15:44</div>
<div class="a" style="left:1905px;top:1px;width:15px;height:9px;border-left:1px solid #4a566a;background:#8c9cb4"></div>
</div>
<div class="a" style="left:621px;top:295px;width:674px;height:466px;background:#f0f0f0;border:1px solid #0c0e12;border-radius:6px 6px 0 0;box-shadow:inset -1px 0 0 #7ecbf4, inset 1px 0 0 #a9d4f2, inset 0 -2px 0 #7ecbf4;overflow:hidden">
<div class="a" style="left:1px;top:0;width:670px;height:1px;background:#e6f2fb"></div>
<div class="a" style="left:1px;top:1px;width:670px;height:23px;background:linear-gradient(#98b3d1 0,#a5bfdd 45%,#b8d3ec 100%)"></div>
<div class="a" style="left:6px;top:6px;font-size:12px;line-height:14px;color:#000"><span style="display:inline-block;white-space:nowrap;width:48.00px;text-align-last:justify">芯片测试</span><span style="letter-spacing:0.33px;margin-left:16px">APP Version: 12.66 Device Model: XGecu T56</span></div>
</div>
<div class="grp" style="left:635px;top:339px;width:461px;height:92px"><span class="lb" style="width:52.00px;text-align-last:justify">测试范围</span></div>
<div class="a" style="left:722px;top:325px;width:315px;height:20px;background:#f0f0f0;border:1px solid;border-color:#c8c8c8 #fff #fff #c8c8c8;font:bold 14px/16px 'Liberation Sans',sans-serif;color:#0a4a4a;text-align:center">6264</div>
<div class="cb d" style="left:651px;top:353px"><svg viewBox="0 0 9 9"><path d="M1 3.2 L3.4 5.6 L8 1 L8 3.4 L3.4 8 L1 5.6 Z" fill="#909090"/></svg></div>
<div class="t g" style="left:669px;top:353px;font-family:'Liberation Serif',serif;font-size:11px;letter-spacing:-0.3pxwidth:33.35px;text-align-last:justify">FLASH</div>
<div class="t g" style="left:785px;top:352px;width:51.35px;text-align-last:justify">开始地址:</div>
<div class="t g" style="left:856px;top:353px;letter-spacing:0pxwidth:32.00px;text-align-last:justify">--------</div>
<div class="t g" style="left:913px;top:352px;width:51.35px;text-align-last:justify">结束地址:</div>
<div class="t g" style="left:984px;top:353px;width:32.00px;text-align-last:justify">--------</div>
<div class="cb" style="left:651px;top:373px"><svg viewBox="0 0 9 9"><path d="M1 3.2 L3.4 5.6 L8 1 L8 3.4 L3.4 8 L1 5.6 Z" fill="#000"/></svg></div>
<div class="t " style="left:669px;top:373px;width:60.00px;text-align-last:justify">数据线测试</div>
<div class="cb" style="left:651px;top:392px"><svg viewBox="0 0 9 9"><path d="M1 3.2 L3.4 5.6 L8 1 L8 3.4 L3.4 8 L1 5.6 Z" fill="#000"/></svg></div>
<div class="t " style="left:669px;top:392px;width:99.35px;text-align-last:justify">地址线开路/短路测</div>
<div class="cb" style="left:818px;top:373px"></div>
<div class="t " style="left:835px;top:373px;width:48.00px;text-align-last:justify">递增测试</div>
<div class="cb" style="left:818px;top:394px"><svg viewBox="0 0 9 9"><path d="M1 3.2 L3.4 5.6 L8 1 L8 3.4 L3.4 8 L1 5.6 Z" fill="#000"/></svg></div>
<div class="t " style="left:835px;top:394px;width:48.00px;text-align-last:justify">单元测试</div>
<div class="cb" style="left:651px;top:437px"><svg viewBox="0 0 9 9"><path d="M1 3.2 L3.4 5.6 L8 1 L8 3.4 L3.4 8 L1 5.6 Z" fill="#000"/></svg></div>
<div class="t " style="left:669px;top:437px;width:36.00px;text-align-last:justify">提示音</div>
<div class="a" style="left:635px;top:469px;width:462px;height:25px;background:#fff;border:1px solid;border-color:#a0a0a0 #fff #fff #a0a0a0;color:#c80000;font-size:12px;line-height:23px;text-align:center"><span style="display:inline-block;white-space:nowrap;width:87.35px;text-align-last:justify">数据线测试错误!</span></div>
<div class="a" style="left:635px;top:502px;width:462px;height:176px;background:#fff;border:1px solid;border-color:#828282 #e3e3e3 #e3e3e3 #828282;box-shadow:inset 1px 1px 0 #696969"><div class="a" style="left:3px;top:1px;font-size:12px;line-height:14px"><span style="display:inline-block;white-space:nowrap;width:99.35px;text-align-last:justify">引脚接触检查通过!</span><br><span style="display:inline-block;white-space:nowrap;width:87.35px;text-align-last:justify">数据线测试错误!</span></div></div>
<div class="a" style="left:675px;top:700px;width:321px;height:14px;background:#f0f0f0;border:1px solid #6e6e6e;box-shadow:inset 1px 1px 0 #a8a8a8, 1px 1px 0 #fff"></div>
<div class="btn" style="left:771px;top:725px;width:75px;height:21px;line-height:18px;border:1px solid #565656;box-shadow:inset 1px 1px 0 #fff, inset -1px -1px 0 #696969, inset -2px -2px 0 #a0a0a0"><span style="display:inline-block;white-space:nowrap;width:24.00px;text-align-last:justify">测试</span></div>
<div class="btn" style="left:886px;top:725px;width:75px;height:21px;line-height:19px"><span style="display:inline-block;white-space:nowrap;width:24.00px;text-align-last:justify">返回</span></div>
<div class="grp" style="left:1110px;top:339px;width:167px;height:405px"><span class="lb" style="width:76.00px;text-align-last:justify">放置芯片位置</span></div>
<svg class="a" style="left:1130px;top:390px" width="130" height="330" viewBox="1130 390 130 330"><rect x="1139.6" y="394.600" width="10.6" height="17" rx="5.3" fill="none" stroke="#787878" stroke-width="3.2"/><rect x="1143.5" y="411" width="3" height="14" fill="#787878"/><rect x="1154" y="410" width="31" height="15" fill="#787878"/><rect x="1206" y="410" width="31" height="15" fill="#787878"/><rect x="1137" y="424" width="114" height="259" rx="2" fill="#787878"/><rect x="1141" y="428" width="107" height="251" fill="#efefef"/><rect x="1149" y="682" width="36" height="15" fill="#787878"/><rect x="1205" y="682" width="36" height="15" fill="#787878"/><rect x="1191.5" y="427.5" width="9" height="252" fill="#c8c8c8" stroke="#828282"/><circle cx="1196" cy="459" r="4" fill="#d0d0d0" stroke="#909090"/><rect x="1149.5" y="436.5" width="32" height="4" fill="#f7f7f7" stroke="#6e6e6e"/><rect x="1209.5" y="436.5" width="32" height="4" fill="#f7f7f7" stroke="#6e6e6e"/><rect x="1149.5" y="446.5" width="32" height="4" fill="#f7f7f7" stroke="#6e6e6e"/><rect x="1209.5" y="446.5" width="32" height="4" fill="#f7f7f7" stroke="#6e6e6e"/><rect x="1149.5" y="456.5" width="32" height="4" fill="#f7f7f7" stroke="#6e6e6e"/><rect x="1209.5" y="456.5" width="32" height="4" fill="#f7f7f7" stroke="#6e6e6e"/><rect x="1149.5" y="466.5" width="32" height="4" fill="#f7f7f7" stroke="#6e6e6e"/><rect x="1209.5" y="466.5" width="32" height="4" fill="#f7f7f7" stroke="#6e6e6e"/><rect x="1149.5" y="476.5" width="32" height="4" fill="#f7f7f7" stroke="#6e6e6e"/><rect x="1209.5" y="476.5" width="32" height="4" fill="#f7f7f7" stroke="#6e6e6e"/><rect x="1149.5" y="486.5" width="32" height="4" fill="#f7f7f7" stroke="#6e6e6e"/><rect x="1209.5" y="486.5" width="32" height="4" fill="#f7f7f7" stroke="#6e6e6e"/><rect x="1149.5" y="496.5" width="32" height="4" fill="#f7f7f7" stroke="#6e6e6e"/><rect x="1209.5" y="496.5" width="32" height="4" fill="#f7f7f7" stroke="#6e6e6e"/><rect x="1149.5" y="506.5" width="32" height="4" fill="#f7f7f7" stroke="#6e6e6e"/><rect x="1209.5" y="506.5" width="32" height="4" fill="#f7f7f7" stroke="#6e6e6e"/><rect x="1149.5" y="516.5" width="32" height="4" fill="#f7f7f7" stroke="#6e6e6e"/><rect x="1209.5" y="516.5" width="32" height="4" fill="#f7f7f7" stroke="#6e6e6e"/><rect x="1149.5" y="526.5" width="32" height="4" fill="#f7f7f7" stroke="#6e6e6e"/><rect x="1209.5" y="526.5" width="32" height="4" fill="#f7f7f7" stroke="#6e6e6e"/><rect x="1149.5" y="536.5" width="32" height="4" fill="#f7f7f7" stroke="#6e6e6e"/><rect x="1209.5" y="536.5" width="32" height="4" fill="#f7f7f7" stroke="#6e6e6e"/><rect x="1168" y="537" width="9" height="3" rx="1" fill="#646464"/><rect x="1215" y="537" width="8" height="3" rx="1" fill="#646464"/><rect x="1149.5" y="546.5" width="32" height="4" fill="#f7f7f7" stroke="#6e6e6e"/><rect x="1209.5" y="546.5" width="32" height="4" fill="#f7f7f7" stroke="#6e6e6e"/><rect x="1168" y="547" width="9" height="3" rx="1" fill="#646464"/><rect x="1215" y="547" width="8" height="3" rx="1" fill="#646464"/><rect x="1149.5" y="556.5" width="32" height="4" fill="#f7f7f7" stroke="#6e6e6e"/><rect x="1209.5" y="556.5" width="32" height="4" fill="#f7f7f7" stroke="#6e6e6e"/><rect x="1168" y="557" width="9" height="3" rx="1" fill="#646464"/><rect x="1215" y="557" width="8" height="3" rx="1" fill="#646464"/><rect x="1149.5" y="566.5" width="32" height="4" fill="#f7f7f7" stroke="#6e6e6e"/><rect x="1209.5" y="566.5" width="32" height="4" fill="#f7f7f7" stroke="#6e6e6e"/><rect x="1168" y="567" width="9" height="3" rx="1" fill="#646464"/><rect x="1215" y="567" width="8" height="3" rx="1" fill="#646464"/><rect x="1149.5" y="576.5" width="32" height="4" fill="#f7f7f7" stroke="#6e6e6e"/><rect x="1209.5" y="576.5" width="32" height="4" fill="#f7f7f7" stroke="#6e6e6e"/><rect x="1168" y="577" width="9" height="3" rx="1" fill="#646464"/><rect x="1215" y="577" width="8" height="3" rx="1" fill="#646464"/><rect x="1149.5" y="586.5" width="32" height="4" fill="#f7f7f7" stroke="#6e6e6e"/><rect x="1209.5" y="586.5" width="32" height="4" fill="#f7f7f7" stroke="#6e6e6e"/><rect x="1168" y="587" width="9" height="3" rx="1" fill="#646464"/><rect x="1215" y="587" width="8" height="3" rx="1" fill="#646464"/><rect x="1149.5" y="596.5" width="32" height="4" fill="#f7f7f7" stroke="#6e6e6e"/><rect x="1209.5" y="596.5" width="32" height="4" fill="#f7f7f7" stroke="#6e6e6e"/><rect x="1168" y="597" width="9" height="3" rx="1" fill="#646464"/><rect x="1215" y="597" width="8" height="3" rx="1" fill="#646464"/><rect x="1149.5" y="606.5" width="32" height="4" fill="#f7f7f7" stroke="#6e6e6e"/><rect x="1209.5" y="606.5" width="32" height="4" fill="#f7f7f7" stroke="#6e6e6e"/><rect x="1168" y="607" width="9" height="3" rx="1" fill="#646464"/><rect x="1215" y="607" width="8" height="3" rx="1" fill="#646464"/><rect x="1149.5" y="616.5" width="32" height="4" fill="#f7f7f7" stroke="#6e6e6e"/><rect x="1209.5" y="616.5" width="32" height="4" fill="#f7f7f7" stroke="#6e6e6e"/><rect x="1168" y="617" width="9" height="3" rx="1" fill="#646464"/><rect x="1215" y="617" width="8" height="3" rx="1" fill="#646464"/><rect x="1149.5" y="626.5" width="32" height="4" fill="#f7f7f7" stroke="#6e6e6e"/><rect x="1209.5" y="626.5" width="32" height="4" fill="#f7f7f7" stroke="#6e6e6e"/><rect x="1168" y="627" width="9" height="3" rx="1" fill="#646464"/><rect x="1215" y="627" width="8" height="3" rx="1" fill="#646464"/><rect x="1149.5" y="636.5" width="32" height="4" fill="#f7f7f7" stroke="#6e6e6e"/><rect x="1209.5" y="636.5" width="32" height="4" fill="#f7f7f7" stroke="#6e6e6e"/><rect x="1168" y="637" width="9" height="3" rx="1" fill="#646464"/><rect x="1215" y="637" width="8" height="3" rx="1" fill="#646464"/><rect x="1149.5" y="646.5" width="32" height="4" fill="#f7f7f7" stroke="#6e6e6e"/><rect x="1209.5" y="646.5" width="32" height="4" fill="#f7f7f7" stroke="#6e6e6e"/><rect x="1168" y="647" width="9" height="3" rx="1" fill="#646464"/><rect x="1215" y="647" width="8" height="3" rx="1" fill="#646464"/><rect x="1149.5" y="656.5" width="32" height="4" fill="#f7f7f7" stroke="#6e6e6e"/><rect x="1209.5" y="656.5" width="32" height="4" fill="#f7f7f7" stroke="#6e6e6e"/><rect x="1168" y="657" width="9" height="3" rx="1" fill="#646464"/><rect x="1215" y="657" width="8" height="3" rx="1" fill="#646464"/><rect x="1149.5" y="666.5" width="32" height="4" fill="#f7f7f7" stroke="#6e6e6e"/><rect x="1209.5" y="666.5" width="32" height="4" fill="#f7f7f7" stroke="#6e6e6e"/><rect x="1168" y="667" width="9" height="3" rx="1" fill="#646464"/><rect x="1215" y="667" width="8" height="3" rx="1" fill="#646464"/><path d="M1176.5 535.500 H1191.500 V541.500 H1200.500 V535.500 H1216.500 V671.500 H1176.500 Z" fill="#747474" stroke="#8e8e8e"/><circle cx="1184" cy="546" r="3.6" fill="#b8b8b8"/></svg>
<div class="a" style="left:1176px;top:703px;font:bold 12px/14px 'Liberation Sans',sans-serif;letter-spacing:1.2px">ZIF48</div>
</body></html>
